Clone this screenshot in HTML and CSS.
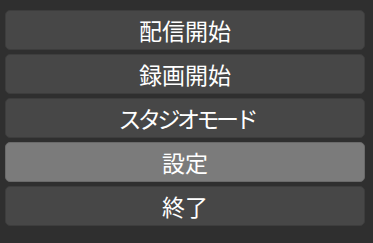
FILE: index.html
```html
<!DOCTYPE html>
<html lang="ja">
<head>
<meta charset="utf-8">
<link rel="stylesheet" href="styles.css">
</head>
<body>
<div class="controls">
  <button class="btn">配信開始</button>
  <button class="btn">録画開始</button>
  <button class="btn btn-kana">スタジオモード</button>
  <button class="btn btn-hover">設定</button>
  <button class="btn">終了</button>
</div>
</body>
</html>
```

FILE: styles.css
```css
html, body {
  margin: 0;
  padding: 0;
  background: #2f2f2f;
  width: 373px;
  height: 243px;
  overflow: hidden;
}
.controls {
  display: flex;
  flex-direction: column;
  gap: 4px;
  padding: 10px 8px 0 5px;
}
.btn {
  height: 40px;
  margin: 0;
  padding: 0;
  border: 1px solid #3d3d3d;
  border-radius: 5px;
  background: #474747;
  color: #ffffff;
  font-family: "Noto Sans CJK JP", "Noto Sans", sans-serif;
  font-size: 23px;
  line-height: 38px;
  text-align: center;
}
.btn-kana {
  letter-spacing: -3.5px;
  text-indent: 3.5px;
}
.btn-hover {
  background: #7b7b7b;
  border-color: #6a6a6a;
}
```
